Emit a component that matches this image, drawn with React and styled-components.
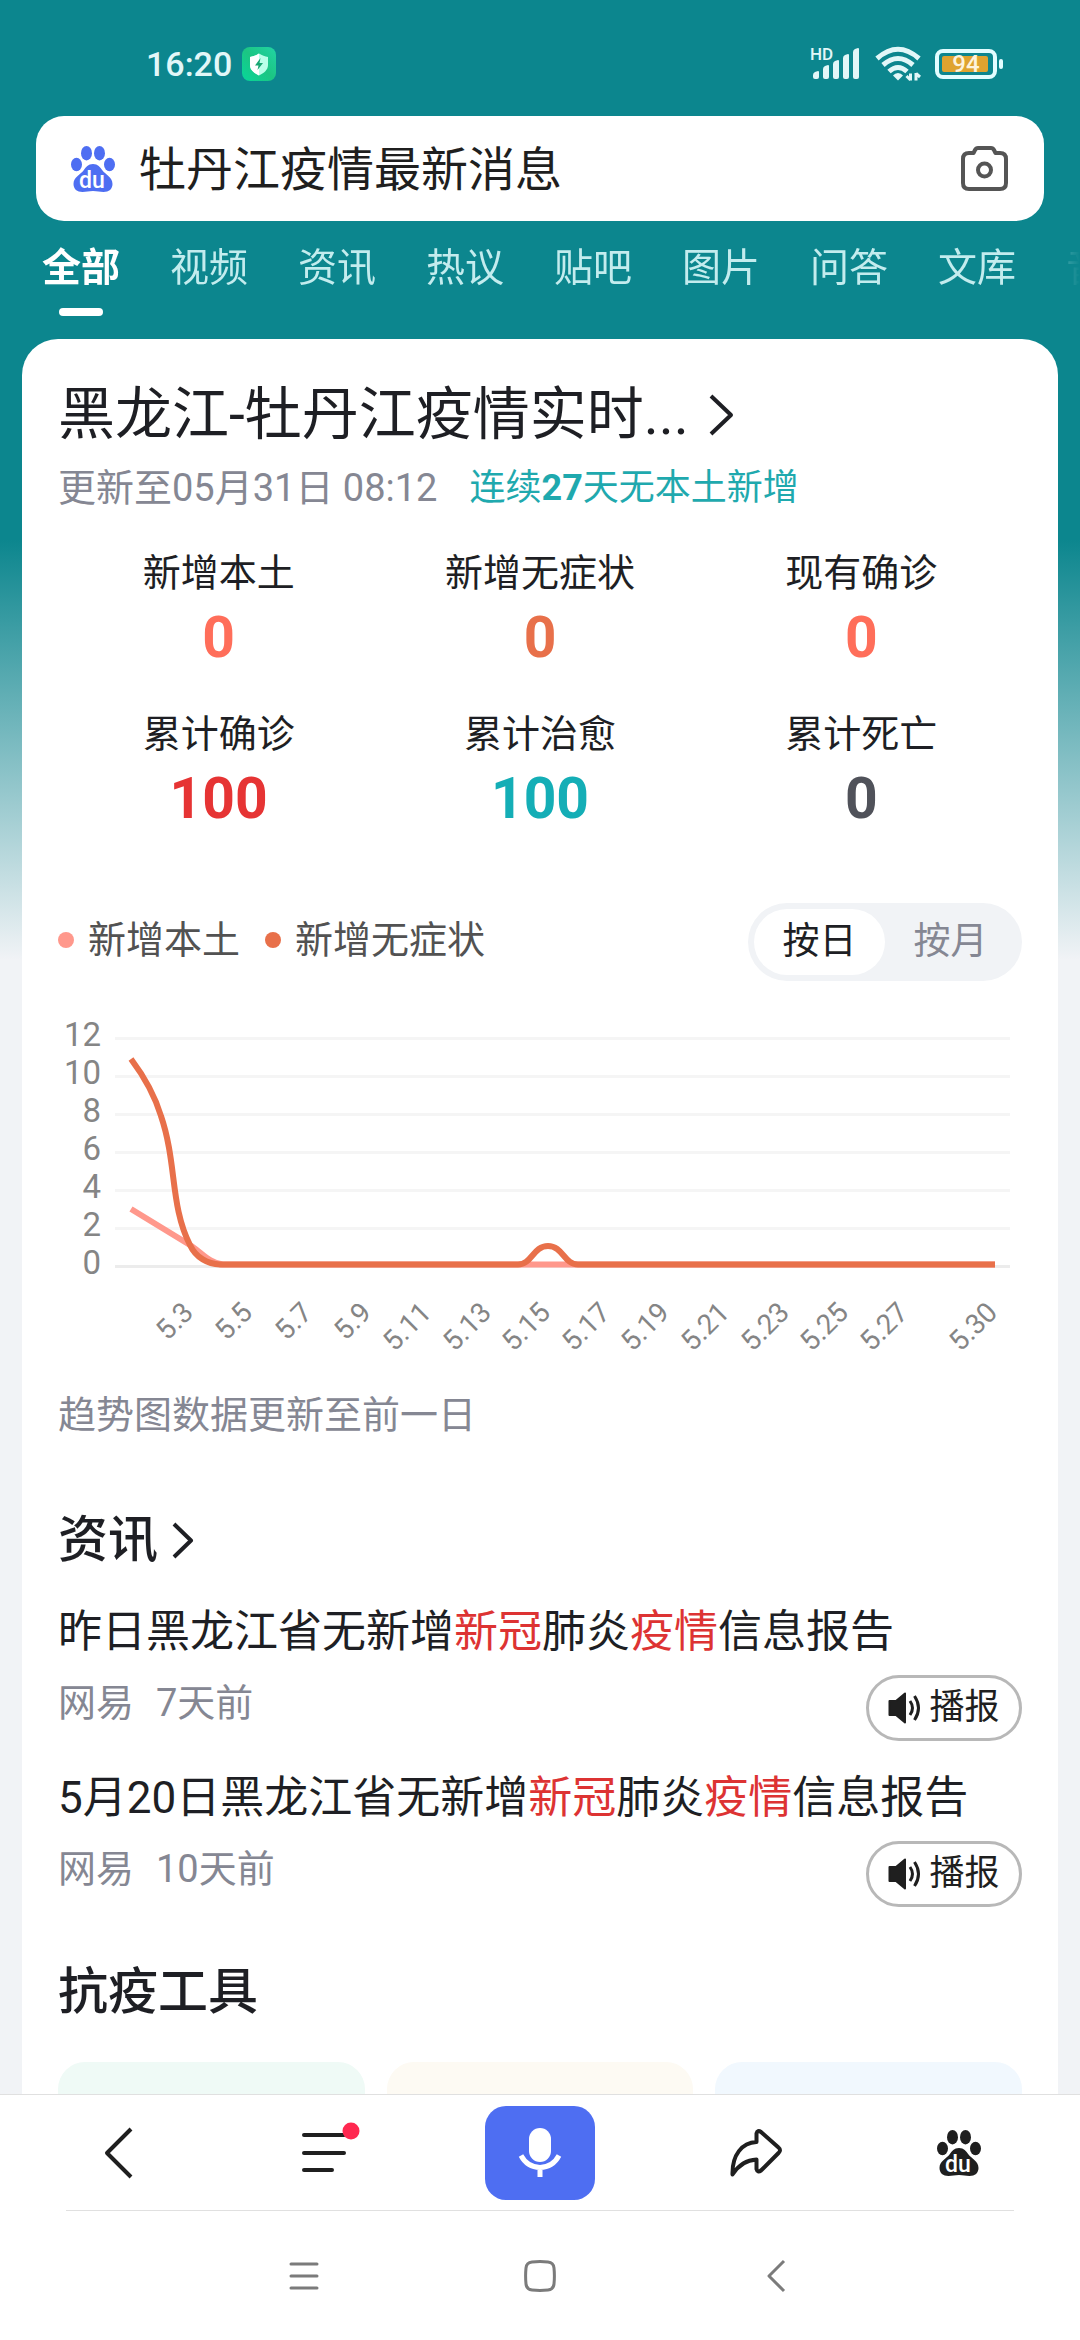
import React from 'react'
import styled, { createGlobalStyle } from 'styled-components'

var GlobalStyle = createGlobalStyle`
  * {
    box-sizing: border-box;
  }
  body {
    margin: 0;
    font-family: Roboto, "Noto Sans CJK SC", sans-serif;
    color: #1e1f24;
  }
  button, input {
    margin: 0;
    padding: 0;
    border: 0;
    background: none;
    font: inherit;
    color: inherit;
  }
  a {
    color: inherit;
    text-decoration: none;
  }
  h1, h2, p, ul, dl, dd {
    margin: 0;
    padding: 0;
    font-weight: 400;
  }
  svg {
    display: block;
    flex: none;
    overflow: visible;
  }
`

var Screen = styled.div`
  display: flex;
  flex-direction: column;
  height: 100vh;
  background: #fff;
`
var Content = styled.main`
  flex: 1;
  min-height: 0;
  overflow: hidden;
  background: linear-gradient(#0c868e 540px, #f1f3f6 960px);
`

/* status bar */
var StatusBar = styled.div`
  display: flex;
  align-items: center;
  gap: 14px;
  height: 116px;
  padding: 12px 76px 0 146px;
  color: #e2f7f8;
`
var Clock = styled.time`
  margin-right: -4px;
  font-size: 34px;
  line-height: 40px;
  font-weight: 500;
`
var Spacer = styled.div`
  flex: 1;
`

/* search */
var SearchBar = styled.form`
  display: flex;
  align-items: center;
  gap: 24px;
  height: 105px;
  margin: 0 36px;
  padding: 0 36px 0 35px;
  border-radius: 28px;
  background: #fff;
`
var SearchInput = styled.input`
  flex: 1;
  min-width: 0;
  height: 80px;
  padding-bottom: 6px;
  font-size: 47px;
  color: #1f1f1f;
  outline: none;
`

var Tabs = styled.nav`
  display: flex;
  gap: 50px;
  height: 118px;
  padding: 19px 0 0 42px;
  overflow: hidden;
  mask-image: linear-gradient(to right, #000 calc(100% - 60px), transparent);
`
var Tab = styled.button`
  display: flex;
  flex: none;
  flex-direction: column;
  align-items: center;
  gap: 12px;
  font-size: 39px;
  line-height: 56px;
  font-weight: ${props => props.$active ? 700 : 400};
  color: ${props => props.$active ? '#fff' : '#c3ecee'};
  &::after {
    content: '';
    width: 44px;
    height: 8px;
    border-radius: 4px;
    background: ${props => props.$active ? '#fff' : 'transparent'};
  }
`

/* result card */
var Card = styled.section`
  margin: 0 22px;
  padding: 36px 36px 60px;
  border-radius: 36px 36px 0 0;
  background: #fff;
`
var Title = styled.h1`
  font-size: 57px;
  line-height: 80px;
`
var TitleLink = styled.a`
  display: flex;
  align-items: center;
  gap: 20px;
`
var Updated = styled.p`
  display: flex;
  gap: 32px;
  margin-top: 5px;
  font-size: 38px;
  line-height: 56px;
  color: #858793;
`
var Streak = styled.span`
  font-size: 36px;
  color: #1fa9ae;
`
var Stats = styled.dl`
  display: grid;
  grid-template-columns: repeat(3, 1fr);
  row-gap: 39px;
  margin-top: 32px;
`
var Stat = styled.div`
  text-align: center;
`
var StatLabel = styled.dt`
  font-size: 38px;
  line-height: 50px;
`
var StatValue = styled.dd`
  margin-top: 8px;
  font-size: 57px;
  line-height: 64px;
  font-weight: 700;
  color: ${props => props.$color};
`

/* trend chart */
var ChartHead = styled.div`
  display: flex;
  align-items: center;
  justify-content: space-between;
  margin-top: 72px;
`
var Legend = styled.ul`
  display: flex;
  gap: 25px;
  padding-bottom: 4px;
  font-size: 38px;
  line-height: 50px;
  color: #525252;
  list-style: none;
`
var LegendItem = styled.li`
  display: flex;
  align-items: center;
  gap: 14px;
  &::before {
    content: '';
    width: 16px;
    height: 16px;
    border-radius: 50%;
    background: ${props => props.$color};
  }
`
var Segments = styled.div`
  display: flex;
  padding: 6px;
  border-radius: 39px;
  background: #f1f3f6;
`
var Segment = styled.button`
  width: 131px;
  height: 66px;
  border-radius: 33px;
  font-size: 37px;
  line-height: 60px;
  color: ${props => props.$active ? '#1e1f24' : '#858793'};
  background: ${props => props.$active ? '#fff' : 'transparent'};
`
var ChartSvg = styled.svg`
  width: 100%;
  margin-top: 30px;
  font-size: 33px;
  fill: #858585;
`
var Note = styled.p`
  margin-top: 16px;
  font-size: 38px;
  line-height: 56px;
  color: #858793;
`

/* news */
var SectionTitle = styled.h2`
  display: flex;
  align-items: center;
  gap: 14px;
  margin-top: ${props => props.$top}px;
  font-size: 50px;
  line-height: 70px;
  font-weight: 500;
`
var NewsItem = styled.article`
  margin-top: 27px;
`
var NewsTitle = styled.a`
  display: block;
  font-size: 44px;
  line-height: 60px;
  white-space: nowrap;
`
var Mark = styled.em`
  font-style: normal;
  color: #dd3333;
`
var NewsFoot = styled.div`
  display: flex;
  align-items: flex-start;
  justify-content: space-between;
  margin-top: 13px;
`
var NewsMeta = styled.p`
  display: flex;
  gap: 22px;
  font-size: 38px;
  line-height: 56px;
  color: #858793;
`
var ReadButton = styled.button`
  display: flex;
  align-items: center;
  justify-content: center;
  gap: 8px;
  width: 156px;
  height: 66px;
  border: 3px solid #b8b8b8;
  border-radius: 33px;
  font-size: 35px;
  line-height: 56px;
  color: #1f1f1f;
`

var Tools = styled.div`
  display: grid;
  grid-template-columns: repeat(3, 1fr);
  gap: 22px;
  margin-top: 35px;
`
var Tool = styled.a`
  height: 180px;
  border-radius: 27px;
  background: ${props => props.$bg};
`

/* bottom bars */
var Toolbar = styled.footer`
  display: grid;
  grid-template-columns: repeat(5, 1fr);
  align-items: center;
  height: 116px;
  border-top: 1px solid #e0e0e0;
`
var ToolbarButton = styled.button`
  display: flex;
  align-items: center;
  justify-content: center;
  height: 94px;
  &:first-child {
    padding-left: 22px;
  }
  &:last-child {
    padding-right: 26px;
  }
`
var MicBox = styled.span`
  display: flex;
  align-items: center;
  justify-content: center;
  width: 110px;
  height: 94px;
  border-radius: 21px;
  background: #4e6ef2;
`
var Divider = styled.hr`
  width: calc(100% - 132px);
  height: 1px;
  margin: 0 auto;
  border: 0;
  background: #e0e0e0;
`
var SystemNav = styled.nav`
  display: grid;
  grid-template-columns: repeat(3, 1fr);
  align-items: center;
  height: 129px;
  padding: 0 186px;
`
var NavButton = styled.button`
  display: flex;
  justify-content: center;
`

function Shield() {
  return (
    <svg width="34" height="34" viewBox="0 0 34 34">
      <defs>
        <linearGradient id="shieldBg" x1="0" y1="1" x2="1" y2="0">
          <stop offset="0" stopColor="#07d79a" />
          <stop offset=".5" stopColor="#1cc583" />
          <stop offset="1" stopColor="#22d4a4" />
        </linearGradient>
      </defs>
      <rect width="34" height="34" rx="8" fill="url(#shieldBg)" />
      <path d="M17 6.500c3 2 6 3 9 3.400v8.100c0 5-4 8-9 10.500-5-2.500-9-5.500-9-10.500V9.900c3-.4 6-1.400 9-3.400z" fill="#b9ffe9" />
      <path d="M17 6.500v22c-5-2.500-9-5.500-9-10.500V9.900c3-.4 6-1.400 9-3.400z" fill="#fff" />
      <path d="M18.500 11l-5.500 7.500h3.500L15.500 23l5.500-7h-3.500z" fill="#17a672" />
    </svg>
  )
}

function Signal() {
  var tops = [24, 18, 13, 7, 1]
  return (
    <svg width="51" height="34" viewBox="0 0 51 34" fill="#e2f7f8">
      <text x="0" y="13" fontSize="17" fontWeight="500">HD</text>
      {tops.map((top, i) => {
        var x = 3 + i * 10
        return <path key={i} d={`M${x} ${top + 4}q0-2 2-3l3-1q1 0 1 1V30q0 2-2 2h-2q-2 0-2-2z`} />
      })}
    </svg>
  )
}

function Wifi() {
  return (
    <svg width="46" height="36" viewBox="0 0 46 36" fill="none" stroke="#e2f7f8" strokeWidth="5">
      <path d="M2 12.500Q23-6 44 12.500" />
      <path d="M8 19Q23 6 38 19" />
      <path d="M14 25.500Q23 17.500 32 25.500" />
      <path d="M23 27q3 0 5 2.500L23 34.500 18 29.500Q20 27 23 27z" fill="#e2f7f8" stroke="none" />
      <path d="M35.500 34.500V27.500M35.500 34l-4-4M41 27v7.500M41 27.500l4 3.500" strokeWidth="3" />
    </svg>
  )
}

function Battery() {
  return (
    <svg width="69" height="30" viewBox="0 0 69 30">
      <rect x="2" y="2" width="58" height="26" rx="6" fill="none" stroke="#e2fdff" strokeWidth="4" />
      <rect x="7" y="7" width="46" height="16" rx="2" fill="#dfa32f" />
      <rect x="64" y="10" width="4" height="10" rx="2" fill="#e2fdff" />
      <text x="31" y="23" fontSize="24" fontWeight="500" textAnchor="middle" fill="#fdf3dc">94</text>
    </svg>
  )
}

function Paw({ color }) {
  return (
    <svg width="44" height="46" viewBox="0 0 44 46" fill={color}>
      <ellipse cx="5.500" cy="18.500" rx="5.500" ry="6.700" />
      <ellipse cx="15.500" cy="7.200" rx="5.500" ry="7.200" />
      <ellipse cx="28.500" cy="7.200" rx="5.500" ry="7.200" />
      <ellipse cx="38.500" cy="18.500" rx="5.500" ry="6.700" />
      <path d="M22 18c-5 0-7 3-9.500 6.500C9.500 28.500 2.500 31 2.500 38c0 5 3.500 8 9 8 4 0 6-1 10.500-1s6.500 1 10.500 1c5.500 0 9-3 9-8 0-7-7-9.500-10-13.500C29 21 27 18 22 18z" />
      <text x="21" y="42" fontSize="23" fontWeight="500" textAnchor="middle" fill="#fff">du</text>
    </svg>
  )
}

function Camera() {
  return (
    <svg width="47" height="45" viewBox="0 0 47 45" fill="none" stroke="#555" strokeWidth="4" strokeLinejoin="round">
      <path d="M8 7h4.500l1.500-3q1-2 3-2h13q2 0 3 2l1.500 3H39q6 0 6 6v24q0 6-6 6H8q-6 0-6-6V13q0-6 6-6z" />
      <circle cx="23.500" cy="24" r="6.500" />
    </svg>
  )
}

function Chevron({ width, height, stroke = 4, color = '#1e1f24', left }) {
  var near = 2
  var far = width - 2
  var points = left
    ? [far, near, near, height / 2, far, height - near]
    : [near, near, far, height / 2, near, height - near]
  return (
    <svg width={width} height={height} fill="none" stroke={color} strokeWidth={stroke} strokeLinejoin="round">
      <polyline points={points.join(' ')} />
    </svg>
  )
}

function Speaker() {
  return (
    <svg width="33" height="32" viewBox="0 0 33 32" fill="none" stroke="#1f1f1f" strokeWidth="3">
      <path d="M1.500 9H8L17 1.500v29L8 23H1.500z" fill="#1f1f1f" strokeWidth="2" strokeLinejoin="round" />
      <path d="M22 9q5 7 0 14M26.500 4q8 12 0 24" />
    </svg>
  )
}

var series = {
  local: { color: '#ff988c', path: 'M73 198L132 234C142 240 152 253 165 253.500H937' },
  silent: {
    color: '#e8704a',
    path: 'M73 48C85 64 96 82 103 105C119 152 112 195 132 234C138 247 150 253 162 253.500H460C474 253.500 475 235 490 235C505 235 506 253.500 520 253.500H937'
  }
}
var days = [3, 5, 7, 9, 11, 13, 15, 17, 19, 21, 23, 25, 27, 30]
var levels = [12, 10, 8, 6, 4, 2, 0]

function TrendChart() {
  return (
    <ChartSvg viewBox="0 0 964 360" role="img" aria-label="新增趋势">
      {levels.map(level => (
        <g key={level}>
          <rect x="57" y={254 - level * 19} width="895" height="3" fill={level ? '#f5f5f5' : '#ececec'} />
          <text x="43" y={263 - level * 19} textAnchor="end">{level}</text>
        </g>
      ))}
      <g fill="none" strokeWidth="6">
        <path d={series.local.path} stroke={series.local.color} />
        <path d={series.silent.path} stroke={series.silent.color} />
      </g>
      <g fontSize="28" textAnchor="end">
        {days.map(day => (
          <text key={day} transform={`translate(${Math.round(77 + (day - 1) * 29.8)} 303) rotate(-45)`}>
            {'5.' + day}
          </text>
        ))}
      </g>
    </ChartSvg>
  )
}

var tabs = ['全部', '视频', '资讯', '热议', '贴吧', '图片', '问答', '文库', '音乐']
var stats = [
  { label: '新增本土', value: 0, color: '#ff6e5a' },
  { label: '新增无症状', value: 0, color: '#e8704a' },
  { label: '现有确诊', value: 0, color: '#ff6e5a' },
  { label: '累计确诊', value: 100, color: '#e63434' },
  { label: '累计治愈', value: 100, color: '#14aeb6' },
  { label: '累计死亡', value: 0, color: '#50525a' }
]
var news = [
  { lead: '昨日黑龙江省无新增', time: '7天前' },
  { lead: '5月20日黑龙江省无新增', time: '10天前' }
]
var tools = ['#effaf6', '#fdfaf3', '#f1f8fe']

function App() {
  return (
    <Screen>
      <GlobalStyle />
      <Content>
        <StatusBar>
          <Clock>16:20</Clock>
          <Shield />
          <Spacer />
          <Signal />
          <Wifi />
          <Battery />
        </StatusBar>
        <SearchBar>
          <Paw color="#4e6ef2" />
          <SearchInput type="text" aria-label="搜索" defaultValue="牡丹江疫情最新消息" />
          <button type="button" aria-label="拍照搜索"><Camera /></button>
        </SearchBar>
        <Tabs>
          {tabs.map((tab, i) => <Tab key={tab} $active={i === 0}>{tab}</Tab>)}
        </Tabs>

        <Card>
          <Title>
            <TitleLink href="#detail">
              黑龙江-牡丹江疫情实时...
              <Chevron width={24} height={42} />
            </TitleLink>
          </Title>
          <Updated>
            <span>更新至05月31日 08:12</span>
            <Streak>连续<b>27</b>天无本土新增</Streak>
          </Updated>
          <Stats>
            {stats.map(stat => (
              <Stat key={stat.label}>
                <StatLabel>{stat.label}</StatLabel>
                <StatValue $color={stat.color}>{stat.value}</StatValue>
              </Stat>
            ))}
          </Stats>

          <ChartHead>
            <Legend>
              <LegendItem $color={series.local.color}>新增本土</LegendItem>
              <LegendItem $color={series.silent.color}>新增无症状</LegendItem>
            </Legend>
            <Segments>
              <Segment $active>按日</Segment>
              <Segment>按月</Segment>
            </Segments>
          </ChartHead>
          <TrendChart />
          <Note>趋势图数据更新至前一日</Note>

          <SectionTitle $top={62}>
            资讯
            <Chevron width={21} height={37} />
          </SectionTitle>
          {news.map(item => (
            <NewsItem key={item.time}>
              <NewsTitle href="#news">
                {item.lead}<Mark>新冠</Mark>肺炎<Mark>疫情</Mark>信息报告
              </NewsTitle>
              <NewsFoot>
                <NewsMeta>
                  <span>网易</span>
                  <span>{item.time}</span>
                </NewsMeta>
                <ReadButton><Speaker />播报</ReadButton>
              </NewsFoot>
            </NewsItem>
          ))}

          <SectionTitle $top={50}>抗疫工具</SectionTitle>
          <Tools>
            {tools.map(bg => <Tool key={bg} href="#tool" $bg={bg} />)}
          </Tools>
        </Card>
      </Content>

      <Toolbar>
        <ToolbarButton aria-label="返回">
          <Chevron left width={28} height={52} color="#1f1f1f" />
        </ToolbarButton>
        <ToolbarButton aria-label="菜单">
          <svg width="72" height="52" viewBox="0 0 72 52">
            <path d="M16 8h40M16 26h40M16 43h28" stroke="#1f1f1f" strokeWidth="4" strokeLinecap="round" />
            <circle cx="63" cy="4" r="8.500" fill="#ff2850" />
          </svg>
        </ToolbarButton>
        <ToolbarButton aria-label="语音搜索">
          <MicBox>
            <svg width="44" height="50" viewBox="0 0 44 50">
              <rect x="11" y="0" width="22" height="34" rx="11" fill="#fff" />
              <path d="M3 27.500Q9 39 22 39.500Q35 39 41 27.500M22 39v10" fill="none" stroke="#fff" strokeWidth="5" />
            </svg>
          </MicBox>
        </ToolbarButton>
        <ToolbarButton aria-label="分享">
          <svg width="52" height="48" viewBox="0 0 52 48" fill="none" stroke="#1f1f1f" strokeWidth="4" strokeLinejoin="round">
            <path d="M2.500 45.500C2 26 12 13.500 26.500 13V4.500q1-4 4.500-1.500L48.500 18.500q3 2.500 0 5.500L31 41.500q-3.500 2.500-4.500-1.500V30.500C16 31 8 37 2.500 45.500z" />
          </svg>
        </ToolbarButton>
        <ToolbarButton aria-label="首页">
          <Paw color="#1f1f1f" />
        </ToolbarButton>
      </Toolbar>
      <Divider />
      <SystemNav>
        <NavButton aria-label="最近任务">
          <svg width="30" height="28" viewBox="0 0 30 28" stroke="#7b7b7b" strokeWidth="3" strokeLinecap="round">
            <path d="M2 2h26M2 14h26M2 26h26" />
          </svg>
        </NavButton>
        <NavButton aria-label="主屏幕">
          <svg width="32" height="32" viewBox="0 0 32 32" fill="none" stroke="#7b7b7b" strokeWidth="3">
            <path d="M8 2q8-.8 16 0 5.500.5 6 6 .8 8 0 16-.5 5.500-6 6-8 .8-16 0-5.500-.5-6-6-.8-8 0-16 .5-5.500 6-6z" />
          </svg>
        </NavButton>
        <NavButton aria-label="后退">
          <Chevron left width={19} height={34} stroke={3} color="#7b7b7b" />
        </NavButton>
      </SystemNav>
    </Screen>
  )
}

export default App
